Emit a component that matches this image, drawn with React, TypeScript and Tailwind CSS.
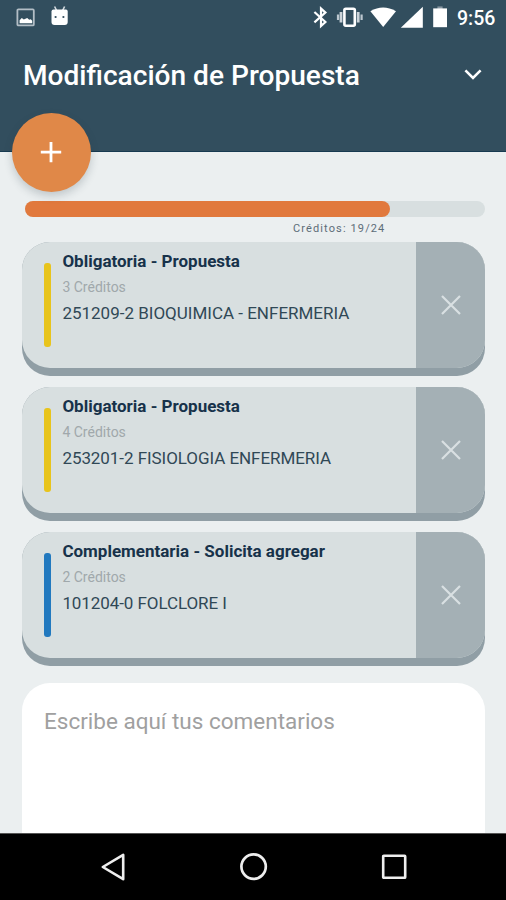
type Course = { kind: string; credits: string; name: string; bar: string; tracking: string };

const courses: Course[] = [
  { kind: 'Obligatoria - Propuesta', credits: '3 Créditos', name: '251209-2 BIOQUIMICA - ENFERMERIA', bar: 'bg-[#e8c41c]', tracking: 'tracking-normal' },
  { kind: 'Obligatoria - Propuesta', credits: '4 Créditos', name: '253201-2 FISIOLOGIA ENFERMERIA', bar: 'bg-[#e8c41c]', tracking: 'tracking-[-0.06px]' },
  { kind: 'Complementaria - Solicita agregar', credits: '2 Créditos', name: '101204-0 FOLCLORE I', bar: 'bg-[#2179bf]', tracking: 'tracking-[-0.08px]' },
];

function StatusBar() {
  return (
    <div className="flex h-9 items-start pt-[5px] pl-4">
      <svg className="mt-[3px] h-5 w-5" viewBox="0 0 20 20">
        <rect x="1.4" y="1.4" width="16.4" height="16" rx="1" fill="none" stroke="#b3bec6" strokeWidth="1.8" />
        <path d="M3.6 15.2v-3l2.2-2.2 2 1.6 3.4-1.6 2 1.8 1.6-.6 1.4 1.6v2.4z" fill="#fff" />
      </svg>
      <svg className="ml-[14px] h-[22px] w-5" viewBox="0 0 20 22">
        <path d="M4.6 1.5l2 4M14.6 1.5l-2 4" stroke="#d5dce1" strokeWidth="1.6" />
        <path d="M1.5 6.5Q1.5 4.7 3.5 4.5h12.5q1.7.2 1.7 2v10.5q0 3-3 3H4.5q-3 0-3-3z" fill="#fff" />
        <circle cx="5.6" cy="12" r="1.1" fill="#314b5c" />
        <circle cx="13.4" cy="12" r="1.1" fill="#314b5c" />
      </svg>
      <svg className="ml-[242px] h-6 w-4" viewBox="0 0 16 24">
        <path d="M2.4 7L13.4 17 9 21V3.6l4.4 4L2.4 17.4" fill="none" stroke="#fff" strokeWidth="2.2" />
      </svg>
      <svg className="ml-2 h-6 w-7" viewBox="0 0 28 24">
        <rect x="8.4" y="3.7" width="10.4" height="17" rx="1.4" fill="none" stroke="#fff" strokeWidth="2.6" />
        <path d="M5 7v10.6M22.2 7v10.6" stroke="#ccd4da" strokeWidth="2.8" />
        <path d="M2 9.6v5.4M25.6 9.6v5.4" stroke="#bcc7cf" strokeWidth="2.2" />
      </svg>
      <svg className="ml-[6px] h-6 w-7" viewBox="0 0 28 24">
        <path d="M.4 6.2Q13 -1.2 26 6.2L13.2 22z" fill="#fff" />
      </svg>
      <svg className="ml-[2px] h-6 w-6" viewBox="0 0 24 24">
        <path d="M22.8 1.8v21H.8z" fill="#fff" />
      </svg>
      <svg className="ml-[8px] h-6 w-4" viewBox="0 0 16 24">
        <path d="M5.4 1.4h5.2v3H5.4z" fill="#8695a0" />
        <path d="M1.2 3.4h13.8v18.8H1.2z" fill="#fff" />
      </svg>
      <span className="ml-[9px] text-[19.5px] leading-[27px] font-medium text-white">9:56</span>
    </div>
  );
}

function CourseCard({ course }: { course: Course }) {
  return (
    <article className="h-[133.5px] rounded-[28px] bg-[#909ea5]">
      <div className="flex h-[125.5px] overflow-hidden rounded-[28px] bg-[#d8dfe0]">
        <div className={`mt-[20.5px] ml-[22px] h-[84.5px] w-[7px] shrink-0 rounded-[3px] ${course.bar}`} />
        <div className="ml-[11.4px] flex grow flex-col pt-[8px] whitespace-nowrap">
          <h2 className="text-[17px] leading-[22px] font-bold text-[#17324a]">{course.kind}</h2>
          <p className="mt-[5px] text-[14px] leading-5 text-[#a0a8ab]">{course.credits}</p>
          <p className={`mt-[5px] text-[17px] leading-[22px] text-[#304856] ${course.tracking}`}>{course.name}</p>
        </div>
        <button className="flex w-[69px] shrink-0 items-center justify-center bg-[#a4b0b5]" aria-label="Quitar">
          <svg className="h-5 w-5" viewBox="0 0 20 20">
            <path d="M1 1l18 18M19 1L1 19" stroke="#d9e0e2" strokeWidth="2.2" />
          </svg>
        </button>
      </div>
    </article>
  );
}

export default function App() {
  return (
    <div className="flex h-[900px] w-[506px] flex-col overflow-hidden bg-[#ebeff0] font-['Roboto',sans-serif]">
      <header className="relative h-[152px] shrink-0 border-b border-[#173a50] bg-[#324e5e]">
        <StatusBar />
        <div className="flex h-[78px] items-center justify-between pr-[23px] pl-[23px]">
          <h1 className="pt-[2px] text-[28.1px] leading-8 font-medium whitespace-nowrap text-white">Modificación de Propuesta</h1>
          <svg className="h-5 w-5" viewBox="0 0 20 20">
            <path d="M2.4 5.4L10 13l7.6-7.6" fill="none" stroke="#fff" strokeWidth="2.6" />
          </svg>
        </div>
        <button className="absolute top-[113px] left-3 flex h-[78.5px] w-[78.5px] items-center justify-center rounded-full bg-[#e08848] shadow-[0_4px_8px_rgba(40,60,70,0.22)]" aria-label="Agregar">
          <svg className="h-[22px] w-[22px]" viewBox="0 0 22 22">
            <path d="M11 .9v20.4M.8 11.1h20.4" stroke="#fff" strokeWidth="2.8" />
          </svg>
        </button>
      </header>
      <main className="flex min-h-0 grow flex-col pt-[49px] pr-[20.6px] pl-[22px]">
        <div className="ml-[3px] h-[15.5px] shrink-0 rounded-full bg-[#d8dfe0]">
          <div className="h-full w-[365px] rounded-full bg-[#e1793d]" />
        </div>
        <p className="ml-[271px] h-[25.5px] shrink-0 pt-[4px] text-[11px] leading-[15px] tracking-[1.12px] text-[#5d6d78]">Créditos: 19/24</p>
        <section className="flex shrink-0 flex-col gap-[11.5px]">
          {courses.map((course) => (
            <CourseCard key={course.name} course={course} />
          ))}
        </section>
        <div className="mt-[17.5px] grow rounded-t-[28px] bg-white px-[22px] pt-[23px]">
          <p className="text-[22.5px] leading-[30px] whitespace-nowrap text-[#a0a0a0]">Escribe aquí tus comentarios</p>
        </div>
      </main>
      <nav className="flex h-[67px] shrink-0 items-center justify-between border-t border-[#555] bg-black pr-[98px] pl-[100px]">
        <svg className="h-7 w-7" viewBox="0 0 28 28">
          <path d="M23.2 1.8v24.4L2.8 14z" fill="none" stroke="#eee" strokeWidth="2.6" strokeLinejoin="round" />
        </svg>
        <svg className="h-7 w-7" viewBox="0 0 28 28">
          <circle cx="13.6" cy="13.6" r="12.2" fill="none" stroke="#eee" strokeWidth="2.7" />
        </svg>
        <svg className="h-7 w-7" viewBox="0 0 28 28">
          <rect x="3.2" y="2.8" width="22" height="22" rx=".6" fill="none" stroke="#eee" strokeWidth="2.6" />
        </svg>
      </nav>
    </div>
  );
}
